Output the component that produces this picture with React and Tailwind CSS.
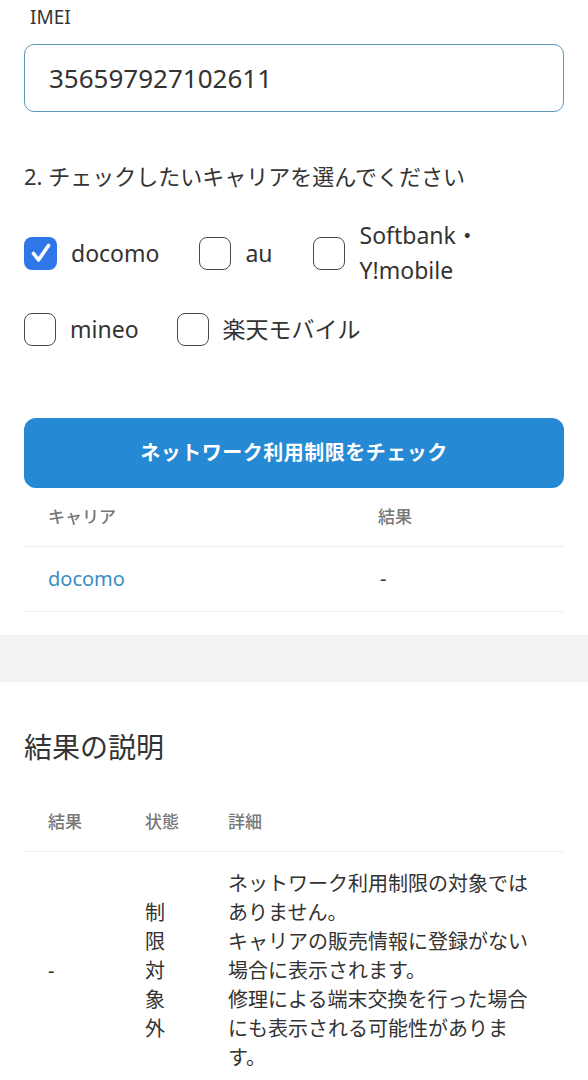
import React, { useState } from 'react'

const CARRIERS = [
  { id: 'docomo', label: 'docomo' },
  { id: 'au', label: 'au' },
  { id: 'softbank', label: 'Softbank・Y!mobile' },
  { id: 'mineo', label: 'mineo' },
  { id: 'rakuten', label: '楽天モバイル' },
]

const font = "font-['Noto_Sans','Noto_Sans_CJK_JP',sans-serif]"

function Box({ checked }) {
  if (checked) {
    return (
      <span className="flex h-[33px] w-[33px] shrink-0 items-center justify-center rounded-[8px] bg-[#2f76e8]">
        <svg width="24" height="24" viewBox="0 0 24 24" fill="none" stroke="white" strokeWidth="3.6" strokeLinecap="round" strokeLinejoin="round">
          <path d="M4.5 12.5l5 6.5L19.5 4.5" />
        </svg>
      </span>
    )
  }
  return <span className="h-[33px] w-[32px] shrink-0 rounded-[8px] border-[1.5px] border-[#4a4a4a] bg-white" />
}

function Check({ item, checked, onToggle, className = '' }) {
  return (
    <label onClick={onToggle} className={`flex cursor-pointer items-center gap-[14px] ${className}`}>
      <Box checked={checked} />
      <span className="text-[23px] leading-[35px] text-[#333]">{item.label}</span>
    </label>
  )
}

export default function App() {
  const [sel, setSel] = useState({ docomo: true })
  const toggle = (id) => setSel((s) => ({ ...s, [id]: !s[id] }))

  return (
    <div className={`${font} w-[588px] bg-white text-[#333]`}>
      <div className="px-6">
        <div className="pl-[6px] pt-[4px] text-[19px] leading-[26px] text-[#333]">IMEI</div>
        <div className="mt-[14px] flex h-[68px] items-center rounded-[10px] border-[1.5px] border-[#5e95bb] px-6">
          <span className="text-[26px] text-[#333]">356597927102611</span>
        </div>

        <div className="mt-[48px] text-[22px] leading-[32px] text-[#333]">2. チェックしたいキャリアを選んでください</div>

        <div className="mt-[26px] flex items-center">
          <Check item={CARRIERS[0]} checked={!!sel.docomo} onToggle={() => toggle('docomo')} />
          <Check item={CARRIERS[1]} checked={!!sel.au} onToggle={() => toggle('au')} className="ml-[40px]" />
          <label onClick={() => toggle('softbank')} className="ml-[40px] flex cursor-pointer items-center gap-[15px]">
            <Box checked={!!sel.softbank} />
            <span className="text-[23px] leading-[35px] text-[#333]">Softbank・<br />Y!mobile</span>
          </label>
        </div>
        <div className="mt-[24px] flex items-center">
          <Check item={CARRIERS[3]} checked={!!sel.mineo} onToggle={() => toggle('mineo')} />
          <Check item={CARRIERS[4]} checked={!!sel.rakuten} onToggle={() => toggle('rakuten')} className="ml-[38px]" />
        </div>

        <button className="mt-[71px] flex h-[70px] w-full items-center justify-center rounded-[12px] bg-[#2589d3] text-[20px] font-bold tracking-[0.5px] text-white">
          ネットワーク利用制限をチェック
        </button>

        {/* result table */}
        <div className="flex h-[59px] items-center border-b border-[#eee] text-[17px] font-medium text-[#777]">
          <div className="w-[354px] pl-6">キャリア</div>
          <div>結果</div>
        </div>
        <div className="flex h-[65px] items-center border-b border-[#eee] text-[20px]">
          <div className="w-[354px] pl-6 text-[#3c8dc2]">docomo</div>
          <div className="pl-[2px] text-[#333]">-</div>
        </div>
      </div>

      <div className="mt-[23px] h-[47px] bg-[#f2f3f5]" />

      <div className="px-6">
        <h2 className="mt-[47px] text-[28px] font-normal leading-[36px] text-[#333]">結果の説明</h2>

        <div className="mt-[31px] flex h-[56px] items-center border-b border-[#eee] pb-[3px] text-[17px] font-medium text-[#777]">
          <div className="w-[121px] pl-6">結果</div>
          <div className="w-[83px]">状態</div>
          <div>詳細</div>
        </div>
        <div className="flex items-center py-[17px] text-[20px] leading-[29px] text-[#333]">
          <div className="w-[121px] pl-6">-</div>
          <div className="w-[83px] pr-[48px]">制限対象外</div>
          <div className="w-[311px]">
            <p>ネットワーク利用制限の対象ではありません。</p>
            <p>キャリアの販売情報に登録がない場合に表示されます。</p>
            <p>修理による端末交換を行った場合にも表示される可能性があります。</p>
          </div>
        </div>
      </div>
    </div>
  )
}
